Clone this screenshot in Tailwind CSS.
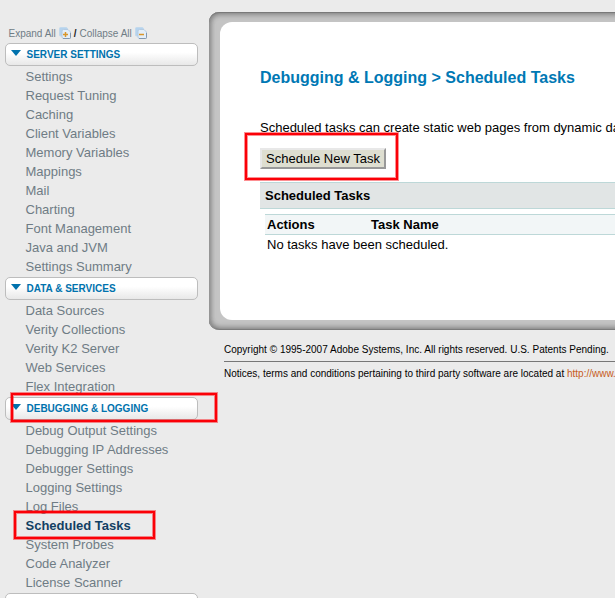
<!DOCTYPE html>
<html lang="en">
<head>
<meta charset="utf-8">
<title>Scheduled Tasks</title>
<script src="https://cdn.jsdelivr.net/npm/@tailwindcss/browser@4"></script>
</head>
<body class="relative h-[598px] w-[615px] overflow-hidden bg-[#ebebeb] font-['Liberation_Sans',Arial,sans-serif] text-[13px] text-black">
<div class="flex h-[598px] w-[615px] overflow-hidden">
  <nav class="w-[209px] shrink-0 pt-[26px] pl-[5px] text-[#6f7c85]">
    <div class="mb-[2px] flex h-[15px] items-center pl-[3.5px] text-[10px] leading-[15px] whitespace-pre"><span class="w-[50.500px]">Expand All</span><svg class="-mt-[2px] h-3 w-3" viewBox="0 0 12 12"><path d="M1.500 .5H7a1.500 1.500 0 0 1 1.500 1.500V9h-7a1 1 0 0 1-1-1V1.500a1 1 0 0 1 1-1z" fill="#b5d3ee" stroke="#c3d9ec"/><path d="M4.500 2.500H9l2.500 2.500v5.500a1 1 0 0 1-1 1h-6a1.500 1.500 0 0 1-1.500-1.500V4a1.500 1.500 0 0 1 1.500-1.500z" fill="#e3eef9" stroke="#b4cbe2"/><path d="M4 11.500h6.500a1 1 0 0 0 1-1V6" fill="none" stroke="#8298b0"/><path d="M6.500 5v5M4 7.500h5" stroke="#d9962b" stroke-width="1.500"/></svg><span class="w-[8.500px] text-center font-bold text-[#222]">/</span><span class="w-[55px]">Collapse All</span><svg class="-mt-[2px] h-3 w-3" viewBox="0 0 12 12"><path d="M1.500 .5H7a1.500 1.500 0 0 1 1.500 1.500V9h-7a1 1 0 0 1-1-1V1.500a1 1 0 0 1 1-1z" fill="#b5d3ee" stroke="#c3d9ec"/><path d="M4.500 2.500H9l2.500 2.500v5.500a1 1 0 0 1-1 1h-6a1.500 1.500 0 0 1-1.500-1.500V4a1.500 1.500 0 0 1 1.500-1.500z" fill="#e3eef9" stroke="#b4cbe2"/><path d="M4 11.500h6.500a1 1 0 0 0 1-1V6" fill="none" stroke="#8298b0"/><path d="M4 7.500h5" stroke="#d9962b" stroke-width="1.500"/></svg></div>

    <h2 class="flex h-[23px] w-[193px] items-center rounded-[5px] border border-[#bdbdbd] bg-linear-to-b from-white from-40% to-[#e8e8e8] pl-[5px] text-[10px] font-bold text-[#0072ad]"><svg class="mr-[5.500px] mb-[3px] h-[6px] w-[10px]" viewBox="0 0 10 6"><path d="M0 0h10L5 6z" fill="#0072ad"/></svg>SERVER SETTINGS</h2>
    <ul class="mb-px pt-px pl-[20.500px] leading-[19px]">
      <li>Settings</li><li>Request Tuning</li><li>Caching</li><li>Client Variables</li><li>Memory Variables</li><li>Mappings</li><li>Mail</li><li>Charting</li><li>Font Management</li><li>Java and JVM</li><li>Settings Summary</li>
    </ul>
    <h2 class="flex h-[23px] w-[193px] items-center rounded-[5px] border border-[#bdbdbd] bg-linear-to-b from-white from-40% to-[#e8e8e8] pl-[5px] text-[10px] font-bold text-[#0072ad]"><svg class="mr-[5.500px] mb-[3px] h-[6px] w-[10px]" viewBox="0 0 10 6"><path d="M0 0h10L5 6z" fill="#0072ad"/></svg>DATA &amp; SERVICES</h2>
    <ul class="mb-px pt-px pl-[20.500px] leading-[19px]">
      <li>Data Sources</li><li>Verity Collections</li><li>Verity K2 Server</li><li>Web Services</li><li>Flex Integration</li>
    </ul>
    <h2 class="flex h-[23px] w-[193px] items-center rounded-[5px] border border-[#bdbdbd] bg-linear-to-b from-white from-40% to-[#e8e8e8] pl-[5px] text-[10px] font-bold text-[#0072ad]"><svg class="mr-[5.500px] mb-[3px] h-[6px] w-[10px]" viewBox="0 0 10 6"><path d="M0 0h10L5 6z" fill="#0072ad"/></svg>DEBUGGING &amp; LOGGING</h2>
    <ul class="mb-px pt-px pl-[20.500px] leading-[19px]">
      <li>Debug Output Settings</li><li>Debugging IP Addresses</li><li>Debugger Settings</li><li>Logging Settings</li><li>Log Files</li><li class="font-bold text-[#123f63]">Scheduled Tasks</li><li>System Probes</li><li>Code Analyzer</li><li>License Scanner</li>
    </ul>
    <div class="h-[23px] w-[193px] rounded-[5px] border border-[#bdbdbd] bg-white"></div>
  </nav>

  <main class="w-[500px] shrink-0 pt-3">
    <div class="h-[318px] rounded-[10px] bg-[#c4c4c4] pt-[10px] pl-[11px] shadow-[inset_0_1px_1px_#777,inset_1px_0_1px_#999,inset_0_-1px_1px_#777,inset_0_3px_5px_#8c8c8c,inset_0_-3px_5px_#8c8c8c,inset_3px_0_4px_#a5a5a5]">
      <section class="h-[298px] rounded-[12px] bg-white pt-[46px] pl-10">
        <h1 class="text-[16px] leading-[19px] font-bold whitespace-nowrap text-[#0078b4]">Debugging &amp; Logging &gt; Scheduled Tasks</h1>
        <p class="mt-[33px] leading-[15px] whitespace-nowrap">Scheduled tasks can create static web pages from dynamic data sources.</p>
        <button class="mt-[13px] block h-[21px] w-[126px] border-2 border-t-[#e8e8e8] border-r-[#999] border-b-[#999] border-l-[#e8e8e8] bg-[#deded0] text-[13px] leading-[17px] whitespace-nowrap">Schedule New Task</button>
        <h3 class="mt-[13px] h-[27px] border-y border-[#bdd8d8] bg-[#e1e5e5] pl-[5px] leading-[25px] font-bold">Scheduled Tasks</h3>
        <table class="mt-[5px] ml-[5px] w-full table-fixed border-collapse text-left">
          <thead><tr class="h-[20px] border-y border-[#bdd8d8] bg-[#f2f6f7] leading-[19px]"><th class="w-[104px] p-0 pl-[2px]">Actions</th><th class="p-0 pl-[2px]">Task Name</th></tr></thead>
          <tbody><tr><td colspan="2" class="p-0 pl-[2px] leading-[19px]">No tasks have been scheduled.</td></tr></tbody>
        </table>
      </section>
    </div>
    <footer class="pt-[13px] pl-[15px] text-[10px] leading-[13px] whitespace-nowrap">
      <p class="[word-spacing:0.100px]">Copyright © 1995-2007 Adobe Systems, Inc. All rights reserved. U.S. Patents Pending.</p>
      <hr class="mt-[5px] mb-[5px] border-[#777]">
      <p>Notices, terms and conditions pertaining to third party software are located at <span class="text-[#c75b1c]">http://www.adobe.com</span></p>
    </footer>
  </main>
</div>
<!-- Callout frames over the page -->
<div class="absolute top-[133px] left-[245px] h-[47px] w-[153px] border-2 border-[#fb0007] shadow-[0_0_0_1px_#fb000770,inset_0_0_0_1px_#fb000770]"></div>
<div class="absolute top-[393px] left-[11px] h-[29px] w-[206px] border-2 border-[#fb0007] shadow-[0_0_0_1px_#fb000770,inset_0_0_0_1px_#fb000770]"></div>
<div class="absolute top-[511px] left-[14px] h-[28px] w-[141px] border-2 border-[#fb0007] shadow-[0_0_0_1px_#fb000770,inset_0_0_0_1px_#fb000770]"></div>
</body>
</html>
